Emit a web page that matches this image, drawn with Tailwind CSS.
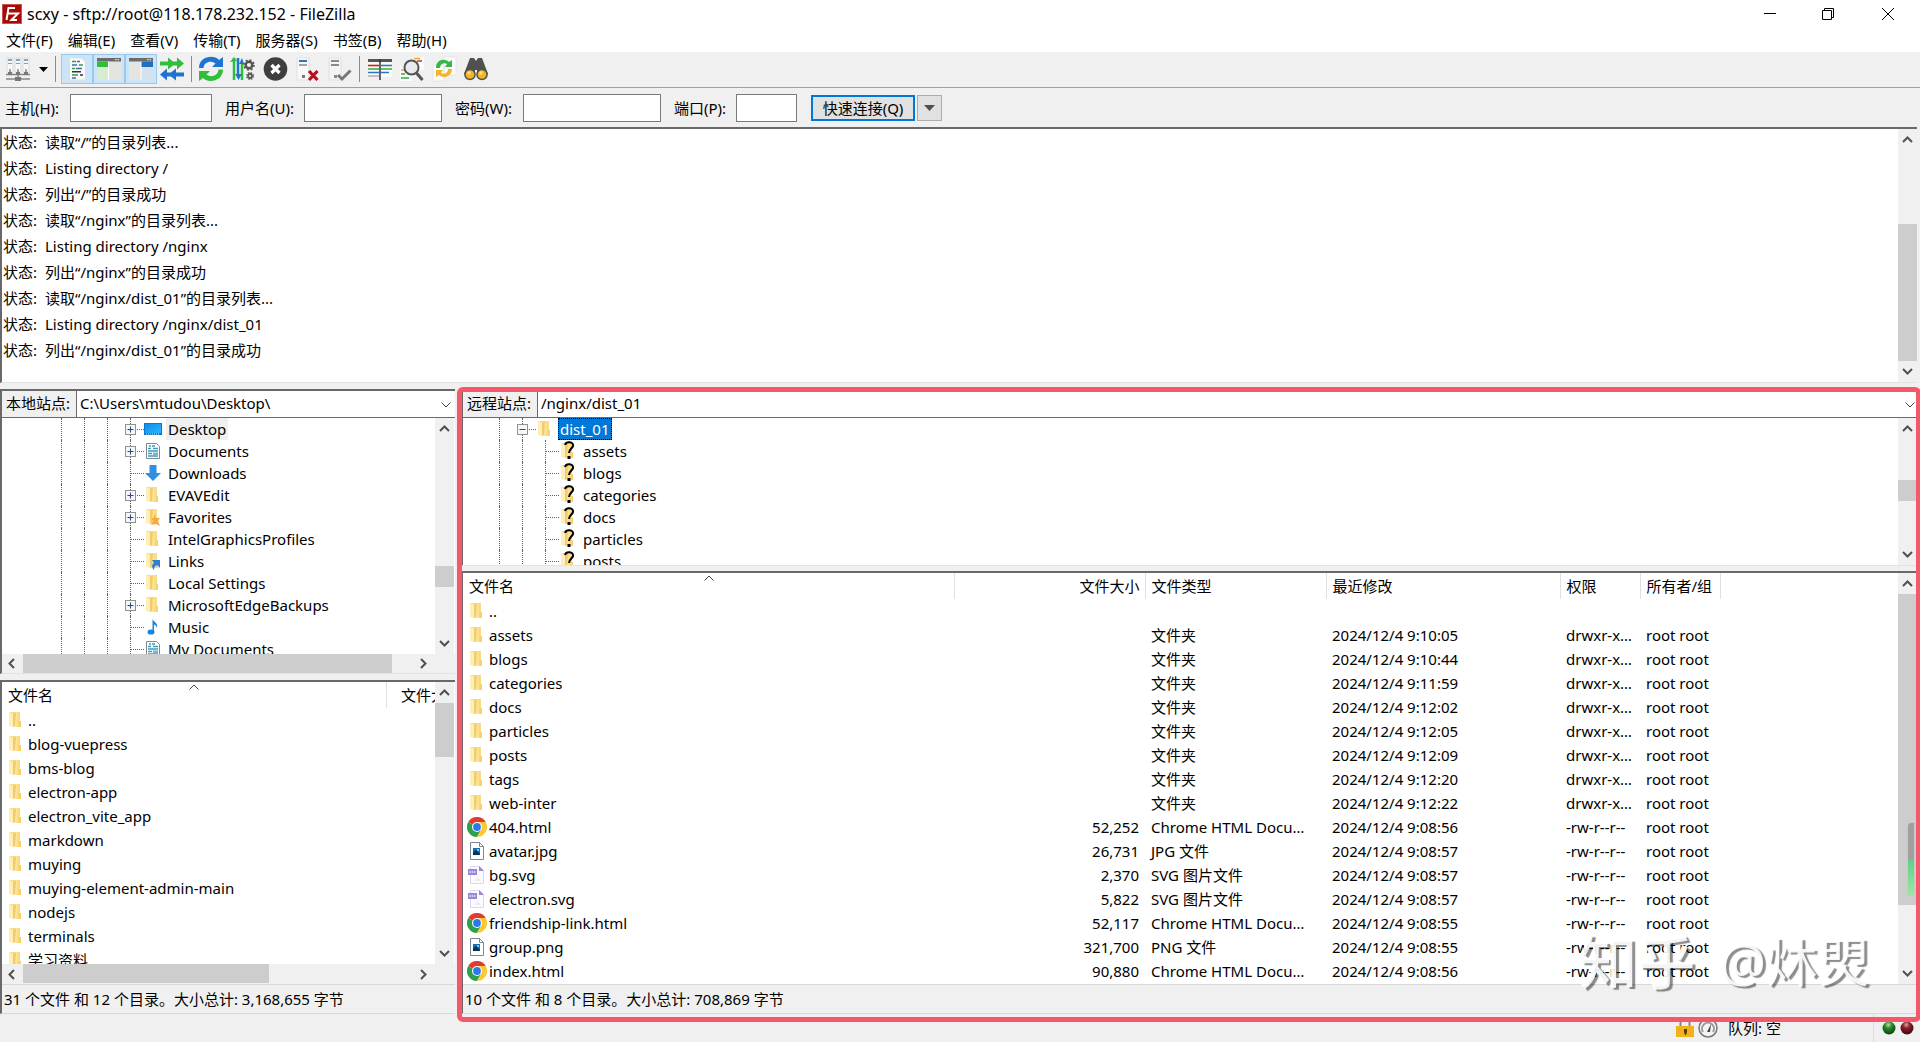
<!DOCTYPE html>
<html lang="zh-CN">
<head>
    <meta charset="UTF-8">
    <meta name="viewport" content="width=device-width, initial-scale=1.0">
    <title>scxy - sftp://root@118.178.232.152 - FileZilla</title>
    <script src="https://cdn.jsdelivr.net/npm/@tailwindcss/browser@4"></script>
</head>
<body class="h-screen flex flex-col overflow-hidden bg-[#f0f0f0] text-black text-[15px] leading-[22px] font-['Noto_Sans','Noto_Sans_CJK_SC',sans-serif]">

    <!-- icons -->
    <svg class="absolute w-0 h-0">
        <linearGradient id="gold" x1="0" x2="1"><stop offset="0" stop-color="#ffe9a2"/><stop offset="1" stop-color="#f5ce62"/></linearGradient>
        <linearGradient id="sky" x1="0" x2="1" y1="0" y2="1"><stop offset="0" stop-color="#0d8ee9"/><stop offset="1" stop-color="#2db4ff"/></linearGradient>
        <radialGradient id="ledGreen" cx=".45" cy=".25" r=".7"><stop offset="0" stop-color="#b5e0a8"/><stop offset=".4" stop-color="#2c8a2c"/><stop offset="1" stop-color="#0c4a10"/></radialGradient>
        <radialGradient id="ledRed" cx=".45" cy=".25" r=".7"><stop offset="0" stop-color="#d9a3a3"/><stop offset=".4" stop-color="#8a2028"/><stop offset="1" stop-color="#4a060c"/></radialGradient>

        <symbol id="folder" viewBox="0 0 20 20">
            <path d="M3 2h11v14H3z" fill="#f7dc8c"/><path d="M3 2l4 2v13l-4-1z" fill="#ffeeb8"/><path d="M7 4l3-2v14l-3 1z" fill="#f0cc6c"/><path d="M10 2h3v9h2v6H9z" fill="url(#gold)"/>
        </symbol>
        <symbol id="unknown" viewBox="0 0 20 20">
            <use href="#folder" width="20" height="20"/>
            <path d="M7 4c1-4 9-3.500 8 1-.5 2.500-4 3-4 7" fill="none" stroke="#000" stroke-width="2"/><path d="M9.500 15h3v3h-3z"/>
        </symbol>
        <symbol id="star" viewBox="0 0 20 20">
            <use href="#folder" width="20" height="20"/>
            <path d="M11 7l2 4h4l-2 3 2 5-4-2-5 1 2-4-2-3h3z" fill="#f7a93b"/>
        </symbol>
        <symbol id="link" viewBox="0 0 20 20">
            <use href="#folder" width="20" height="20"/>
            <path d="M9 9h8v8l-3-3c-2 1-3 2-3 5-3-3-2-6 0-7z" fill="#2f7fd0"/>
        </symbol>
        <symbol id="desktop" viewBox="0 0 20 20">
            <path d="M1 4h18v12H1z" fill="#0878d0"/><path d="M2 5h16v9H2z" fill="url(#sky)"/><path d="M3 15h13" stroke="#cfeaff" stroke-dasharray="1 1"/>
        </symbol>
        <symbol id="document" viewBox="0 0 20 20">
            <path d="M3.500 2.500h10l3 3v12h-13z" fill="#fff" stroke="#7c8790"/>
            <path d="M6 5h2M9 5h3M5 7.500h3M10 7.500h5M5 10h10M5 12.500h4M5 15h10" stroke="#3f9bbd" stroke-width="1.300"/><path d="M10 11.500h5v3h-5z" fill="#6fb6d4"/>
        </symbol>
        <symbol id="download" viewBox="0 0 20 20">
            <path d="M6.500 2h7v8h4.500l-8 8-8-8h4.500z" fill="#2f8fe0"/>
        </symbol>
        <symbol id="music" viewBox="0 0 20 20">
            <ellipse cx="8" cy="15" rx="3.500" ry="2.600" fill="#1686dc"/><path d="M9.500 15V2c1 3 6 4 4.500 9-.5-2-1.500-3-3-3.500V15z" fill="#1686dc"/>
        </symbol>
        <symbol id="chrome" viewBox="0 0 20 20">
            <path d="M10 10L1.300 5A10 10 0 0 1 18.700 5z" fill="#e33b2e"/>
            <path d="M10 10L1.300 5A10 10 0 0 0 10 20l4.300-7.500z" fill="#2da04e"/>
            <path d="M10 10l4.300 2.500L10 20A10 10 0 0 0 18.700 5H10z" fill="#fcc934"/>
            <circle cx="10" cy="10" r="5" fill="#fff"/><circle cx="10" cy="10" r="3.900" fill="#2f78e8"/>
        </symbol>
        <symbol id="image" viewBox="0 0 20 20">
            <path d="M3.500 1.500h9l4 4v13h-13z" fill="#fff" stroke="#7b8a90"/><path d="M12.500 1.500v4h4" fill="none" stroke="#7b8a90"/>
            <path d="M6 7h7v7H6z" fill="#1a6fb8"/><path d="M6 14v-3l3-2 4 4v1z" fill="#06365f"/><path d="M10 8h2v2h-2z" fill="#7cc4f0"/>
        </symbol>
        <symbol id="vector" viewBox="0 0 20 20">
            <path d="M3.500 1.500h9l4 4v13h-13z" fill="#fcfbff" stroke="#dcd6ee"/><path d="M12 1l5 5h-5z" fill="#9a86cf"/>
            <path d="M1 4h9v6H1z" fill="#9a86d4"/><path d="M2.500 7h6" stroke="#d9cff3" stroke-width="2" stroke-dasharray="1.500 .7"/><path d="M7 16l4-4 3 4z" fill="#eeeaf8"/>
        </symbol>
        <symbol id="up" viewBox="0 0 19 19"><path d="M5 13L9.500 8.500 14 13" fill="none" stroke="#505050" stroke-width="2"/></symbol>
        <symbol id="down" viewBox="0 0 19 19"><path d="M5 6L9.500 10.500 14 6" fill="none" stroke="#505050" stroke-width="2"/></symbol>
        <symbol id="left" viewBox="0 0 19 19"><path d="M12 5L7.500 9.500 12 14" fill="none" stroke="#505050" stroke-width="2"/></symbol>
        <symbol id="right" viewBox="0 0 19 19"><path d="M5 5l4.500 4.500L5 14" fill="none" stroke="#505050" stroke-width="2"/></symbol>
        <symbol id="thin" viewBox="0 0 10 6"><path d="M.5.500L5 5 9.500.500" fill="none" stroke="#444"/></symbol>
    </svg>

    <header class="h-7 shrink-0 flex items-center bg-white text-base">
        <svg class="w-5 h-5 ml-0.5 mr-[5px]" viewBox="0 0 20 20">
            <path d="M0 0h20v20H0z" fill="#a80a0a"/><path d="M.5.500h19v19H.5z" fill="none" stroke="#e89a9a" stroke-dasharray="1 1"/>
            <path d="M4.500 16L6.500 4H13M5.500 9.500h5M10 9.500h6L9.500 16H15" fill="none" stroke="#fff" stroke-width="2"/>
        </svg>
        <h1 class="flex-1">scxy - sftp://root@118.178.232.152 - FileZilla</h1>
        <button class="w-[58px] h-7 flex items-center justify-center" aria-label="最小化"><svg class="w-3 h-3" viewBox="0 0 12 12"><path d="M0 5.500h12" stroke="#000"/></svg></button>
        <button class="w-[58px] h-7 flex items-center justify-center" aria-label="还原"><svg class="w-3 h-3" viewBox="0 0 12 12"><path d="M.5 2.500h9v9h-9zM2.500 2.500v-2h9v9h-2" fill="none" stroke="#000"/></svg></button>
        <button class="w-[61px] h-7 mr-0.5 flex items-center justify-center" aria-label="关闭"><svg class="w-3 h-3" viewBox="0 0 12 12"><path d="M0 0l12 12M12 0L0 12" stroke="#000"/></svg></button>
    </header>

    <nav class="h-6 shrink-0 flex items-center gap-[15px] pl-1.5 bg-white">
        <button>文件(F)</button><button>编辑(E)</button><button>查看(V)</button><button>传输(T)</button><button>服务器(S)</button><button>书签(B)</button><button>帮助(H)</button>
    </nav>

    <div class="h-9 shrink-0 flex items-center pl-0.5 pb-px border-b border-[#a0a0a0]">
        <button class="w-8 h-[30px] flex items-center justify-center" aria-label="站点管理器">
            <svg class="w-[26px] h-[26px]" viewBox="0 0 26 26">
                <path d="M2 2h6v14H2zM10 2h6v14h-6zM18 2h6v14h-6z" fill="#f8f8f8" stroke="#dcdcdc"/>
                <path d="M3 4h4M11 4h4M19 4h4" stroke="#4a90c8" stroke-width="1.500"/><path d="M3 7.500h4M11 7.500h4M19 7.500h4" stroke="#999"/>
                <path d="M5 13v6M13 13v10M21 13v6M1 18.500h24M1 23h24" fill="none" stroke="#858585" stroke-width="1.500"/><path d="M3 16h4v3H3zM11 16h4v3h-4zM19 16h4v3h-4zM10 21h6v4h-6z" fill="#777"/>
            </svg>
        </button>
        <button class="w-[18px] h-[30px] flex items-center justify-center" aria-label="站点列表"><svg class="w-[9px] h-[5px]" viewBox="0 0 9 5"><path d="M0 0h9L4.500 5z"/></svg></button>
        <span class="w-px h-[26px] ml-[3px] mr-[5px] bg-[#8c8c8c]"></span>
        <button class="w-8 h-[30px] flex items-center justify-center bg-[#cce4f7] border border-[#99c9ef]" aria-label="消息日志">
            <svg class="w-[26px] h-[26px]" viewBox="0 0 26 26">
                <path d="M5.500 2h12l4 4v18h-16z" fill="#fafafa" stroke="#ddd"/>
                <path d="M8 5.500h4M15 9h4M8 12.500h3M8 19h6" stroke="#3a9a4a" stroke-width="1.500"/><path d="M13 5.500h3M8 9h5M12 12.500h6M8 22h4" stroke="#3c6ea8" stroke-width="1.500"/><path d="M8 15.800h9M16 19h3" stroke="#333" stroke-width="1.500"/>
            </svg>
        </button>
        <button class="w-8 h-[30px] flex items-center justify-center bg-[#cce4f7] border border-[#99c9ef]" aria-label="本地目录树">
            <svg class="w-[26px] h-[26px]" viewBox="0 0 26 26">
                <path d="M1 2h24v22H1z" fill="#e4e4e0"/><path d="M1 2h24v3.500H1z" fill="#6c6c6c"/><path d="M19 3.700h1.500m1 0H23" stroke="#fff"/>
                <path d="M1 5.500h11v5.500H1z" fill="#2fbf3a"/><path d="M1 11h11v13H1z" fill="#d8ecd2"/><path d="M12.500 5.500V24" stroke="#fff"/>
            </svg>
        </button>
        <button class="w-8 h-[30px] flex items-center justify-center bg-[#cce4f7] border border-[#99c9ef]" aria-label="远程目录树">
            <svg class="w-[26px] h-[26px]" viewBox="0 0 26 26">
                <path d="M1 2h24v22H1z" fill="#e4e4e0"/><path d="M1 2h24v3.500H1z" fill="#6c6c6c"/><path d="M19 3.700h1.500m1 0H23" stroke="#fff"/>
                <path d="M13 5.500h12v5.500H13z" fill="#1f6fc0"/><path d="M13 11h12v13H13z" fill="#d3e1f0"/><path d="M13 5.500V24" stroke="#fff"/>
            </svg>
        </button>
        <button class="w-[30px] h-[30px] flex items-center justify-center" aria-label="传输队列">
            <svg class="w-[26px] h-[26px]" viewBox="0 0 26 26">
                <path d="M1 5.500h8v-4l5 4h4v-4l7 6-7 6v-4h-4l-5 4v-4H1z" fill="#2fbf3a"/><path d="M25 16.500h-8v-4l-5 4H8v-4l-7 6 7 6v-4h4l5 4v-4h8z" fill="#1f74d0"/>
            </svg>
        </button>
        <span class="w-px h-[26px] ml-1 mr-[3px] bg-[#8c8c8c]"></span>
        <button class="w-8 h-[30px] flex items-center justify-center" aria-label="刷新">
            <svg class="w-[26px] h-[26px]" viewBox="0 0 26 26">
                <path d="M1 12C1 0 16-2 21 4l4-3v10H14l3.500-3.500C13 4 6 6 5.500 12z" fill="#1f74d0"/><path d="M25 13.500c0 12-15 14-20 8.500l-4 3V15h11l-3.500 3.500C13 22 20 20 20.500 13.500z" fill="#2fbf3a"/>
            </svg>
        </button>
        <button class="w-8 h-[30px] flex items-center justify-center" aria-label="处理队列">
            <svg class="w-[26px] h-[26px]" viewBox="0 0 26 26">
                <path d="M4 2v22M12 24V7" stroke="#2fbf3a" stroke-width="2.500"/><path d="M8 2v17" stroke="#1f74d0" stroke-width="2.500"/><path d="M0 6l4-5 3 4z" fill="#2fbf3a"/><path d="M5 18h7l-3.500 6z" fill="#1f74d0"/><path d="M9 8l3-6 2 6z" fill="#1f74d0"/>
                <circle cx="19" cy="9" r="3.300" fill="none" stroke="#555" stroke-width="2.400"/><circle cx="19" cy="9" r="5" fill="none" stroke="#555" stroke-width="1.600" stroke-dasharray="2 1.900"/>
                <circle cx="20" cy="20" r="2" fill="none" stroke="#555" stroke-width="1.800"/><circle cx="20" cy="20" r="3.400" fill="none" stroke="#555" stroke-width="1.200" stroke-dasharray="1.500 1.200"/>
            </svg>
        </button>
        <button class="w-8 h-[30px] flex items-center justify-center" aria-label="取消">
            <svg class="w-[26px] h-[26px]" viewBox="0 0 26 26">
                <circle cx="13.500" cy="13" r="11.800" fill="#3f3f3f"/><path d="M9.500 9l8 8M17.500 9l-8 8" stroke="#fff" stroke-width="3.200"/>
            </svg>
        </button>
        <button class="w-8 h-[30px] flex items-center justify-center" aria-label="断开">
            <svg class="w-[26px] h-[26px]" viewBox="0 0 26 26">
                <path d="M3 2h12v22H3z" fill="#f8f8f8" stroke="#e0e0e0"/><path d="M5 5h8" stroke="#2f74b5" stroke-width="2"/><path d="M5 9h8" stroke="#888" stroke-width="1.500"/><path d="M8 19h3v3H8z" fill="#777"/>
                <path d="M15 15l8.500 9M23.500 15L15 24" stroke="#b3121c" stroke-width="3.200"/>
            </svg>
        </button>
        <button class="w-8 h-[30px] flex items-center justify-center" aria-label="重新连接">
            <svg class="w-[26px] h-[26px]" viewBox="0 0 26 26">
                <path d="M3 2h12v22H3z" fill="#f4f4f4" stroke="#e0e0e0"/><path d="M5 5h8M5 9h8" stroke="#8a8a8a" stroke-width="2"/><path d="M8 19h3v3H8z" fill="#888"/>
                <path d="M12 19l4 4 8.500-8.500" fill="none" stroke="#777" stroke-width="3"/>
            </svg>
        </button>
        <span class="w-px h-[26px] mx-1 bg-[#8c8c8c]"></span>
        <button class="w-8 h-[30px] flex items-center justify-center" aria-label="过滤器">
            <svg class="w-[26px] h-[26px]" viewBox="0 0 26 26">
                <path d="M1 3h24v18H1z" fill="#fafafa"/><path d="M1 3h24v3H1z" fill="#555"/><path d="M1 9.500h11" stroke="#c22" stroke-width="1.600"/><path d="M14 9.500h11" stroke="#47a" stroke-width="1.600"/><path d="M1 13h11M14 13h11" stroke="#2fae3a" stroke-width="1.600"/><path d="M1 16.500h11M14 16.500h8" stroke="#2f74c0" stroke-width="1.600"/><path d="M1 20h11" stroke="#888"/><path d="M13 3v21" stroke="#333" stroke-width="1.500"/>
            </svg>
        </button>
        <button class="w-8 h-[30px] flex items-center justify-center" aria-label="目录对比">
            <svg class="w-[26px] h-[26px]" viewBox="0 0 26 26">
                <path d="M14 1h11v13H14zM1 11h12v14H1z" fill="#fcfcfc"/><path d="M15 2.500h6" stroke="#e8a020" stroke-width="1.500"/><path d="M18 5h5" stroke="#c33" stroke-width="1.500"/><path d="M2 14h4" stroke="#e8a020" stroke-width="1.500"/><path d="M2 18h4" stroke="#2fae3a" stroke-width="1.500"/><path d="M2 22h8" stroke="#2fae3a" stroke-width="1.500"/>
                <circle cx="12.500" cy="11.500" r="7" fill="#e6ecf0" stroke="#555" stroke-width="2"/><path d="M17.500 17l6 7" stroke="#555" stroke-width="3"/>
            </svg>
        </button>
        <button class="w-8 h-[30px] flex items-center justify-center" aria-label="同步浏览">
            <svg class="w-[26px] h-[26px]" viewBox="0 0 26 26">
                <path d="M13 1h12v18H13zM2 9h11v16H2z" fill="#fcfcfc" stroke="#e6e6e6"/><path d="M5 12C5 3 14 2 18 6l3-2v7h-7l2-3c-3-2-7 0-7 4z" fill="#35b845"/><path d="M21 13c0 8-9 10-13 6l-3 2v-7h7l-2 3c3 2 7 0 7-4z" fill="#f2b52c"/>
            </svg>
        </button>
        <button class="w-8 h-[30px] flex items-center justify-center" aria-label="搜索">
            <svg class="w-[26px] h-[26px]" viewBox="0 0 26 26">
                <path d="M7 2h4l2 3 2-3h4l6 16H14v-4h-2v4H1z" fill="#505050"/><circle cx="7" cy="18.500" r="5.800" fill="#505050"/><circle cx="19" cy="18.500" r="5.800" fill="#505050"/>
                <circle cx="7" cy="18.500" r="4.300" fill="#f5b31d"/><circle cx="19" cy="18.500" r="4.300" fill="#f5b31d"/><circle cx="6" cy="17" r="1.700" fill="#ffe08a"/><circle cx="18" cy="17" r="1.700" fill="#ffe08a"/>
            </svg>
        </button>
    </div>

    <form class="h-[39px] shrink-0 flex items-center pl-[5px]" onsubmit="return false">
        <label for="host" class="w-[65px]">主机(H):</label>
        <input id="host" type="text" class="w-[142px] h-7 px-1 bg-white border border-[#7a7a7a]">
        <label for="user" class="w-[79px] ml-[13px]">用户名(U):</label>
        <input id="user" type="text" class="w-[138px] h-7 px-1 bg-white border border-[#7a7a7a]">
        <label for="pass" class="w-[68px] ml-[13px]">密码(W):</label>
        <input id="pass" type="password" class="w-[138px] h-7 px-1 bg-white border border-[#7a7a7a]">
        <label for="port" class="w-[62px] ml-[13px]">端口(P):</label>
        <input id="port" type="text" class="w-[61px] h-7 px-1 bg-white border border-[#7a7a7a]">
        <button class="w-[104px] h-[26px] ml-[14px] flex items-center justify-center bg-[#e1e1e1] border-2 border-[#0078d7]">快速连接(Q)</button>
        <button class="w-[25px] h-[26px] ml-0.5 flex items-center justify-center bg-[#e1e1e1] border border-[#adadad]" aria-label="快速连接历史"><svg class="w-[11px] h-1.5" viewBox="0 0 11 6"><path d="M0 0h11L5.500 6z" fill="#505050"/></svg></button>
    </form>

    <!-- message log -->
    <section class="h-64 shrink-0 flex mr-[3px] bg-white border-t-2 border-l-2 border-b border-t-[#696969] border-l-[#696969] border-b-[#e3e3e3]">
        <div id="log" class="flex-1 pl-px leading-[26px]"></div>
        <div class="w-[19px] flex flex-col bg-[#f0f0f0]">
            <button aria-label="向上滚动"><svg class="w-[19px] h-[19px]"><use href="#up"/></svg></button>
            <div class="flex-1 flex flex-col justify-end pb-0.5"><div class="h-[137px] bg-[#cdcdcd]"></div></div>
            <button aria-label="向下滚动"><svg class="w-[19px] h-[19px]"><use href="#down"/></svg></button>
        </div>
    </section>

    <main class="flex-1 min-h-0 flex gap-1.5 mt-1.5">
        <!-- local site -->
        <section class="w-[455px] shrink-0 flex flex-col">
            <div class="h-[29px] shrink-0 flex border-t-2 border-l-2 border-b border-[#696969]">
                <label for="localPath" class="w-[74px] pl-1 leading-6">本地站点:</label>
                <div class="relative flex-1">
                    <select id="localPath" class="block w-full h-[26px] pl-[3px] pb-0.5 appearance-none bg-white border-l border-[#696969]"><option>C:\Users\mtudou\Desktop\</option></select>
                    <svg class="absolute right-1 top-[11px] w-2.5 h-1.5 pointer-events-none"><use href="#thin"/></svg>
                </div>
            </div>
            <div class="h-64 shrink-0 flex flex-col border-l-2 border-b border-l-[#696969] border-b-[#e3e3e3]">
                <div class="flex-1 min-h-0 flex bg-white">
                    <ul id="localTree" class="flex-1 pl-[59px] overflow-hidden"></ul>
                    <div class="w-[19px] mr-px flex flex-col bg-[#f0f0f0]">
                        <button aria-label="向上滚动"><svg class="w-[19px] h-[19px]"><use href="#up"/></svg></button>
                        <div class="flex-1 pt-[129px]"><div class="h-[21px] bg-[#cdcdcd]"></div></div>
                        <button aria-label="向下滚动"><svg class="w-[19px] h-[19px]"><use href="#down"/></svg></button>
                    </div>
                </div>
                <div class="h-[19px] mr-5 flex">
                    <button aria-label="向左滚动"><svg class="w-[19px] h-[19px]"><use href="#left"/></svg></button>
                    <div class="flex-1 pl-0.5"><div class="w-[369px] h-[19px] bg-[#cdcdcd]"></div></div>
                    <button aria-label="向右滚动"><svg class="w-[19px] h-[19px]"><use href="#right"/></svg></button>
                </div>
            </div>
            <div class="flex-1 min-h-0 mt-1.5 flex flex-col border-t-2 border-l-2 border-b border-t-[#696969] border-l-[#696969] border-b-[#d8d8d8]">
                <div class="flex-1 min-h-0 flex bg-white">
                    <div class="relative flex-1 min-w-0 overflow-hidden">
                        <svg class="absolute left-[187px] top-0.5 w-2.5 h-1.5 rotate-180"><use href="#thin"/></svg>
                        <table class="w-[463px] table-fixed">
                            <colgroup><col class="w-[384px]"><col></colgroup>
                            <thead><tr class="h-[26px]"><th class="pl-1.5 text-left font-normal border-r border-[#e0e0e0]">文件名</th><th class="pr-1 text-right font-normal">文件大小</th></tr></thead>
                            <tbody id="localFiles"></tbody>
                        </table>
                    </div>
                    <div class="w-[19px] mr-px flex flex-col bg-[#f0f0f0]">
                        <button aria-label="向上滚动"><svg class="w-[19px] h-[19px]"><use href="#up"/></svg></button>
                        <div class="flex-1 pt-0.5"><div class="h-[54px] bg-[#cdcdcd]"></div></div>
                        <button aria-label="向下滚动"><svg class="w-[19px] h-[19px]"><use href="#down"/></svg></button>
                    </div>
                </div>
                <div class="h-5 mr-5 flex">
                    <button aria-label="向左滚动"><svg class="w-[19px] h-[19px]"><use href="#left"/></svg></button>
                    <div class="flex-1 pl-0.5"><div class="w-[246px] h-[19px] bg-[#cdcdcd]"></div></div>
                    <button aria-label="向右滚动"><svg class="w-[19px] h-[19px]"><use href="#right"/></svg></button>
                </div>
                <p class="h-[29px] shrink-0 pl-0.5 leading-[28px] border-t border-[#d8d8d8]">31 个文件 和 12 个目录。大小总计: 3,168,655 字节</p>
            </div>
        </section>

        <!-- remote site -->
        <section class="relative flex-1 min-w-0 flex flex-col pr-[3px]">
            <div class="h-[29px] shrink-0 flex border-t-2 border-l-2 border-b border-[#696969]">
                <label for="remotePath" class="w-[74px] pl-1 leading-6">远程站点:</label>
                <div class="relative flex-1">
                    <select id="remotePath" class="block w-full h-[26px] pl-[3px] pb-0.5 appearance-none bg-white border-l border-[#696969]"><option>/nginx/dist_01</option></select>
                    <svg class="absolute right-0.5 top-[11px] w-2.5 h-1.5 pointer-events-none"><use href="#thin"/></svg>
                </div>
            </div>
            <div class="h-[148px] shrink-0 flex bg-white border-l-2 border-b border-l-[#696969] border-b-[#e3e3e3]">
                <ul id="remoteTree" class="flex-1 pl-9 overflow-hidden"></ul>
                <div class="w-[19px] flex flex-col bg-[#f0f0f0]">
                    <button aria-label="向上滚动"><svg class="w-[19px] h-[19px]"><use href="#up"/></svg></button>
                    <div class="flex-1 pt-[43px]"><div class="h-[21px] bg-[#cdcdcd]"></div></div>
                    <button aria-label="向下滚动"><svg class="w-[19px] h-[19px]"><use href="#down"/></svg></button>
                </div>
            </div>
            <div class="flex-1 min-h-0 mt-[5px] flex flex-col border-t-2 border-l-2 border-b border-t-[#696969] border-l-[#696969] border-b-[#d8d8d8]">
                <div class="flex-1 min-h-0 flex bg-white">
                    <div class="relative flex-1 min-w-0 overflow-hidden">
                        <svg class="absolute left-[241px] top-0.5 w-2.5 h-1.5 rotate-180"><use href="#thin"/></svg>
                        <table class="w-full table-fixed">
                            <colgroup><col class="w-[491px]"><col class="w-[191px]"><col class="w-[181px]"><col class="w-[234px]"><col class="w-20"><col class="w-20"><col></colgroup>
                            <thead>
                                <tr class="h-[26px]">
                                    <th class="pl-1.5 text-left font-normal border-r border-[#e0e0e0]">文件名</th>
                                    <th class="pr-[5px] text-right font-normal border-r border-[#e0e0e0]">文件大小</th>
                                    <th class="pl-1.5 text-left font-normal border-r border-[#e0e0e0]">文件类型</th>
                                    <th class="pl-1.5 text-left font-normal border-r border-[#e0e0e0]">最近修改</th>
                                    <th class="pl-1.5 text-left font-normal border-r border-[#e0e0e0]">权限</th>
                                    <th class="pl-1.5 text-left font-normal border-r border-[#e0e0e0] whitespace-nowrap">所有者/组</th>
                                    <th></th>
                                </tr>
                            </thead>
                            <tbody id="remoteFiles"></tbody>
                        </table>
                    </div>
                    <div class="w-[19px] flex flex-col bg-[#f0f0f0]">
                        <button aria-label="向上滚动"><svg class="w-[19px] h-[19px]"><use href="#up"/></svg></button>
                        <div class="flex-1 pt-0.5"><div class="h-[311px] bg-[#cdcdcd]"></div></div>
                        <button aria-label="向下滚动"><svg class="w-[19px] h-[19px]"><use href="#down"/></svg></button>
                    </div>
                </div>
                <p class="h-[29px] shrink-0 pl-0.5 leading-[28px] border-t border-[#d8d8d8]">10 个文件 和 8 个目录。大小总计: 708,869 字节</p>
            </div>

            <div class="absolute right-[5px] bottom-[118px] w-2 h-[74px] rounded-l bg-linear-to-b from-[#a0a0a0] from-50% via-[#5fce86] via-50% to-[#98e8a0] border border-[#c8c8c8]"></div>
            <!-- highlight frame -->
            <div class="absolute -left-1 -right-px -top-0.5 -bottom-2 border-[5px] border-[#f5586b] rounded-md pointer-events-none"></div>
            <div class="absolute right-[50px] bottom-[20px] flex items-center gap-6 leading-[64px] text-white/90 whitespace-nowrap pointer-events-none [text-shadow:3px_2px_1px_rgb(0_0_0/0.45)]">
                <span class="text-[58px] font-medium">知乎</span><span class="text-[52px]">@炑焽</span>
            </div>
        </section>
    </main>

    <footer class="h-7 shrink-0 flex items-center justify-end">
        <svg class="w-5 h-5" viewBox="0 0 20 20"><path d="M5.500 10V5c0-5 9-5 9 0v5" fill="none" stroke="#888" stroke-width="2"/><path d="M1 8h18v11H1z" fill="#f2b21c"/><path d="M9 11h3v3l-1 3h-1l-1-3z" fill="#5a3c00"/></svg>
        <svg class="w-5 h-5 ml-[3px]" viewBox="0 0 20 20"><circle cx="10" cy="10" r="9" fill="#f4f4f4" stroke="#777" stroke-width="1.500"/><path d="M5 14a6 6 0 1 1 10 0" fill="none" stroke="#999" stroke-width="2"/><path d="M9 14l4-8-1 8z" fill="#444"/></svg>
        <span class="ml-2.5 w-[145px]">队列: 空</span>
        <span class="w-px h-7 mr-2 bg-[#dcdcdc]"></span>
        <svg class="w-3.5 h-3.5" viewBox="0 0 14 14"><circle cx="7" cy="7" r="6.500" fill="url(#ledGreen)"/></svg>
        <svg class="w-3.5 h-3.5 ml-1 mr-1.5" viewBox="0 0 14 14"><circle cx="7" cy="7" r="6.500" fill="url(#ledRed)"/></svg>
    </footer>

    <script>
        const log = [
            '读取“/”的目录列表...', 'Listing directory /', '列出“/”的目录成功',
            '读取“/nginx”的目录列表...', 'Listing directory /nginx', '列出“/nginx”的目录成功',
            '读取“/nginx/dist_01”的目录列表...', 'Listing directory /nginx/dist_01', '列出“/nginx/dist_01”的目录成功'
        ];

        // name, icon, box: '+', '-' or none, label style
        const localTree = [
            ['Desktop', 'desktop', '+', 'bg-[#f0f0f0]'], ['Documents', 'document', '+'], ['Downloads', 'download', ''],
            ['EVAVEdit', 'folder', '+'], ['Favorites', 'star', '+'], ['IntelGraphicsProfiles', 'folder', ''],
            ['Links', 'link', ''], ['Local Settings', 'folder', ''], ['MicrosoftEdgeBackups', 'folder', '+'],
            ['Music', 'music', ''], ['My Documents', 'document', '']
        ];
        const remoteTree = ['assets', 'blogs', 'categories', 'docs', 'particles', 'posts'];

        const localFiles = ['..', 'blog-vuepress', 'bms-blog', 'electron-app', 'electron_vite_app', 'markdown', 'muying', 'muying-element-admin-main', 'nodejs', 'terminals', '学习资料'];

        const dir = (name, time) => [name, 'folder', '', '文件夹', '2024/12/4 ' + time, 'drwxr-xr-x', 'root root'];
        const file = (name, icon, size, type, time) => [name, icon, size, type, '2024/12/4 ' + time, '-rw-r--r--', 'root root'];
        const remoteFiles = [
            ['..', 'folder', '', '', '', '', ''],
            dir('assets', '9:10:05'), dir('blogs', '9:10:44'), dir('categories', '9:11:59'), dir('docs', '9:12:02'),
            dir('particles', '9:12:05'), dir('posts', '9:12:09'), dir('tags', '9:12:20'), dir('web-inter', '9:12:22'),
            file('404.html', 'chrome', '52,252', 'Chrome HTML Document', '9:08:56'),
            file('avatar.jpg', 'image', '26,731', 'JPG 文件', '9:08:57'),
            file('bg.svg', 'vector', '2,370', 'SVG 图片文件', '9:08:57'),
            file('electron.svg', 'vector', '5,822', 'SVG 图片文件', '9:08:57'),
            file('friendship-link.html', 'chrome', '52,117', 'Chrome HTML Document', '9:08:55'),
            file('group.png', 'image', '321,700', 'PNG 文件', '9:08:55'),
            file('index.html', 'chrome', '90,880', 'Chrome HTML Document', '9:08:56')
        ];

        function treeRow(depth, name, icon, box, style) {
            const guides = '<span class="w-[23px] h-full border-l border-dotted border-[#606060]"></span>'.repeat(depth);
            const boxHtml = box ? `
                <svg class="absolute -left-1.5 top-[6px] w-[11px] h-[11px]" viewBox="0 0 11 11">
                    <rect x=".5" y=".5" width="10" height="10" fill="#f6f6f6" stroke="#919191"/>
                    <path d="${box === '+' ? 'M2.500 5.500h6M5.500 2.500v6' : 'M2.500 5.500h6'}" stroke="#2b4a8c"/>
                </svg>` : '';
            return `
                <li class="h-[22px] flex items-center">
                    ${guides}
                    <span class="relative w-[13px] h-full border-l border-dotted border-[#606060]">
                        <span class="absolute left-0 top-[11px] w-[13px] border-t border-dotted border-[#606060]"></span>${boxHtml}
                    </span>
                    <svg class="w-5 h-5 shrink-0"><use href="#${icon}"/></svg>
                    <span class="ml-[3px] px-0.5 leading-[22px] whitespace-nowrap ${style || ''}">${name}</span>
                </li>`;
        }

        function nameCell(name, icon) {
            return `<td class="pl-1"><div class="flex items-center gap-0.5 whitespace-nowrap"><svg class="w-5 h-5 shrink-0"><use href="#${icon}"/></svg>${name}</div></td>`;
        }

        document.getElementById('log').innerHTML = log.map(text => `<p class="flex"><span class="w-[42px]">状态:</span>${text}</p>`).join('');
        document.getElementById('localTree').innerHTML = localTree.map(row => treeRow(3, ...row)).join('');
        document.getElementById('remoteTree').innerHTML =
            treeRow(1, 'dist_01', 'folder', '-', 'bg-[#0078d7] text-white outline-1 -outline-offset-1 outline-dotted outline-black') +
            remoteTree.map(name => treeRow(2, name, 'unknown', '')).join('');
        document.getElementById('localFiles').innerHTML = localFiles.map(name => `<tr class="h-6">${nameCell(name, 'folder')}<td></td></tr>`).join('');
        document.getElementById('remoteFiles').innerHTML = remoteFiles.map(([name, icon, size, type, time, mode, owner]) => `
            <tr class="h-6">
                ${nameCell(name, icon)}
                <td class="pr-1.5 text-right">${size}</td>
                <td class="pl-1.5 pr-4 truncate">${type}</td>
                <td class="px-1.5 truncate">${time}</td>
                <td class="px-1.5 truncate">${mode}</td>
                <td class="pl-1.5 truncate">${owner}</td>
                <td></td>
            </tr>`).join('');
    </script>
</body>
</html>
